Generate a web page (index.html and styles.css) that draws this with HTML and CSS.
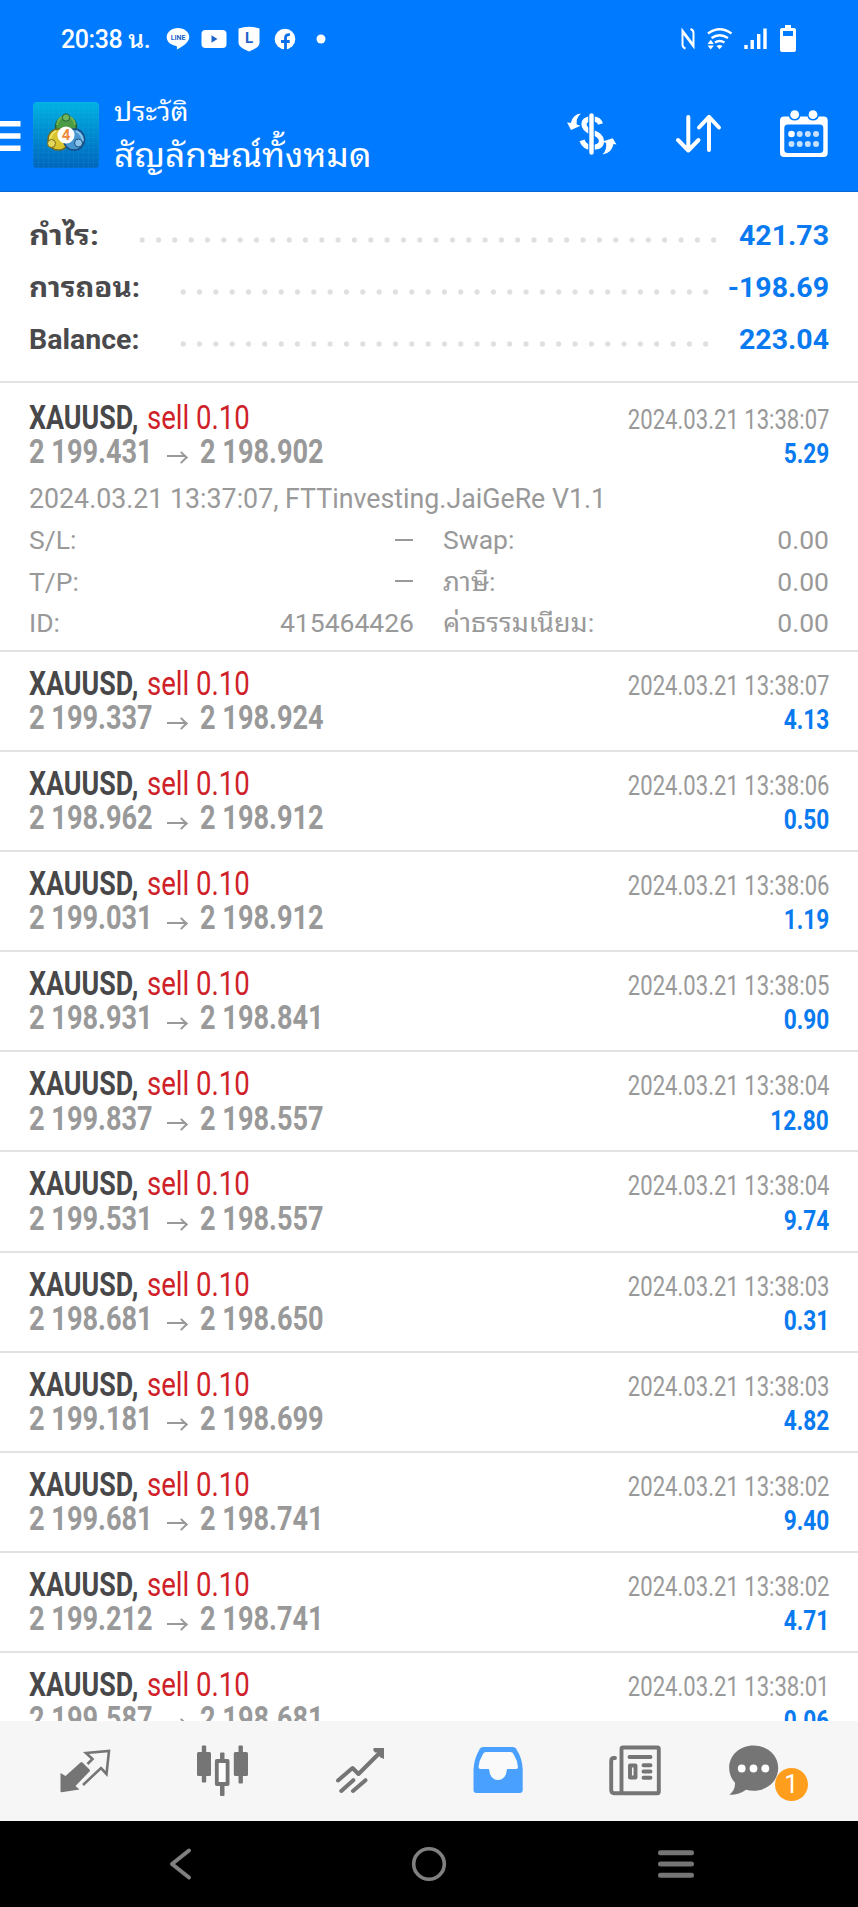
FILE: index.html
```html
<!DOCTYPE html>
<html lang="th">
<head>
<meta charset="utf-8">
<title>ประวัติ</title>
<link rel="stylesheet" href="styles.css">
</head>
<body>
<div class="screen">
  <header class="header">
    <div class="status">
      <span class="clock">20:38 น.</span>
      <div class="status-apps">
        <svg width="24" height="24" viewBox="0 0 24 24"><path d="M12 1C5.700 1 .7 5 .7 10c0 4.600 4 8.200 9.500 8.900.8.2.9.7.7 3.600 3-1.400 12.400-6.600 12.400-12.500C23.300 5 18.300 1 12 1z" fill="#fff"/><text x="12" y="12.600" class="line-word">LINE</text></svg>
        <svg width="26" height="24" viewBox="0 0 26 24"><rect x=".5" y="3" width="25" height="18" rx="4" fill="#fff"/><path d="M10.500 8.300v7.400l6-3.700z" fill="#1f63c8"/></svg>
        <svg width="22" height="26" viewBox="0 0 22 26"><path d="M.5 2.500Q11-1 21.500 2.500V17q0 4.500-10.500 8.500Q.5 21.500.5 17z" fill="#fff"/><text x="11" y="17" class="shield-letter">L</text></svg>
        <svg class="fb" width="22" height="22" viewBox="0 0 22 22"><circle cx="11" cy="11" r="10.300" fill="#fff"/><path d="M11.500 22v-8.500H7M11.500 13.500h4.200M11.500 13.500V9.500q0-3.200 4.400-2.800" fill="none" stroke="#0b6fe8" stroke-width="2.800"/></svg>
        <svg class="more-dot" width="10" height="10" viewBox="0 0 10 10"><circle cx="5" cy="5" r="4.500" fill="#fff"/></svg>
      </div>
      <div class="status-system">
        <svg width="16" height="28" viewBox="681 25 16 28"><path d="M686.500 48.500q-3-1-3-4V30.500l11 14.500M683.500 32l11 14.500V33q0-3-3-4" fill="none" stroke="#fff" stroke-width="2"/></svg>
        <svg width="26" height="28" viewBox="707 25 26 28"><g fill="none" stroke="#fff" stroke-width="2.300"><path d="M708 33.500q11.500-8.500 23.500 0"/><path d="M711.500 38q8-5.500 16.500 0"/><path d="M715 42.500q4.500-3 9.500 0"/></g><path d="M716.500 46q3-2 6 0l-3 3.200zM707.500 44l3.200-4.200 3.200 4.200zM707.500 45.500h6.400l-3.200 4z" fill="#fff"/></svg>
        <svg width="24" height="28" viewBox="745 25 24 28"><path d="M745.300 45h3.400v4h-3.400zM751.500 40h3.400v9h-3.400zM758 34h3.400v15H758zM764.300 28.500h3.400V49h-3.400z" fill="#fff"/></svg>
        <svg width="18" height="28" viewBox="780 25 18 28"><path d="M786 25h6v3h3q2 0 2 2v20q0 2-2 2h-12q-2 0-2-2V30q0-2 2-2h3zM784 31v5h10v-5z" fill="#fff" fill-rule="evenodd"/></svg>
      </div>
    </div>
    <div class="appbar">
      <svg class="menu" width="21" height="32" viewBox="0 120 21 32"><path d="M0 121h20.500v5.500H0zM0 133.200h20.500v5.500H0zM0 145.500h20.500v5.500H0z" fill="#fff"/></svg>
      <svg class="logo" width="66" height="66" viewBox="0 0 66 66">
        <defs>
          <linearGradient id="sky" x1="0" y1="0" x2="0" y2="1"><stop offset="0" stop-color="#00b2e2"/><stop offset=".5" stop-color="#0089cf"/><stop offset="1" stop-color="#0065bd"/></linearGradient>
          <pattern id="mesh" width="5" height="5" patternUnits="userSpaceOnUse"><path d="M0 0H5M0 0V5" stroke="#37b9e8" stroke-opacity=".18" fill="none"/></pattern>
        </defs>
        <rect width="66" height="66" rx="4" fill="url(#sky)"/><rect width="66" height="66" rx="4" fill="url(#mesh)"/>
        <circle cx="33" cy="25" r="10.500" fill="#4b9a46" stroke="#235f3c" stroke-width="1.500"/>
        <circle cx="25.500" cy="37.500" r="10.500" fill="#d8c42e" stroke="#746d20" stroke-width="1.500"/>
        <circle cx="41" cy="37.500" r="10.500" fill="#4596d1" stroke="#194d80" stroke-width="1.500"/>
        <path d="M24 23q1-8 9-9 8 1 9 9" fill="none" stroke="#75b64b" stroke-width="2"/>
        <path d="M17 38q1-7 6-9" fill="none" stroke="#eee063" stroke-width="2"/>
        <path d="M43 29q6 3 7 10" fill="none" stroke="#8ac5eb" stroke-width="2"/>
        <circle cx="33" cy="15.500" r="3.700" fill="#70b45b" stroke="#235f3c"/>
        <circle cx="18.500" cy="41.500" r="4" fill="#e5d65c" stroke="#746d20"/>
        <circle cx="45.500" cy="41" r="4" fill="#8ac2e9" stroke="#194d80"/>
        <circle cx="33" cy="33" r="8.600" fill="#fff"/><text x="33" y="38.300" class="logo-four">4</text>
      </svg>
      <div class="titles"><div class="kicker"><span>ประวัติ</span></div><div class="heading"><span>สัญลักษณ์ทั้งหมด</span></div></div>
      <div class="actions">
        <svg width="52" height="50" viewBox="567 110 52 50"><path d="M601.500 125q-1.500-5.200-8.500-5.200-8 0-8 5.500 0 5 8 8 9.500 3.200 9.500 8.700 0 6.300-9.500 6.300-7.500 0-10-7" fill="none" stroke="#fff" stroke-width="5.200"/><path d="M592.500 116v37.500" stroke="#007aff" stroke-width="6.500"/><path d="M592.500 116.500v37" stroke="#fff" stroke-width="4.400" stroke-linecap="round"/><path d="M582 114.500q-8 .5-10.200 9.500l-3.800-.8 4 7.800 9.500-4.200-3.800-1.200q-1-6.500 4.300-11.100zM603.500 155.500q9-1 11-10.500l3 .5-3.800-6.200-10.200 3.200 3.600 1.400q1 7-3.600 11.600z" fill="#fff"/></svg>
        <svg width="50" height="42" viewBox="674 114 50 42"><g fill="none" stroke="#fff" stroke-width="4" stroke-linecap="round" stroke-linejoin="round"><path d="M688.300 118v33M678 141l10.300 10.500L698.500 141"/><path d="M709 151v-33M699 128.500l10-10.700 10 10.700"/></g></svg>
        <svg width="48" height="50" viewBox="780 109 48 50"><path d="M784 116.500h5q1 4 5.700 4t5.600-4h7.200q1 4 5.600 4t5.600-4h5q4 0 4 4V153q0 4-4 4H784q-4 0-4-4v-32.500q0-4 4-4z" fill="#fff"/><circle cx="794.700" cy="114.700" r="4.400" fill="#fff"/><circle cx="813" cy="114.700" r="4.400" fill="#fff"/><rect x="784.300" y="124.500" width="39" height="28.500" rx="3.500" fill="#007aff"/><g fill="#c6e0ff"><circle cx="791.500" cy="134" r="3.300" fill="#fff"/><circle cx="799.700" cy="134" r="3"/><circle cx="807.800" cy="134" r="3"/><circle cx="816" cy="134" r="3"/><circle cx="791.500" cy="144" r="3"/><circle cx="799.700" cy="144" r="3"/><circle cx="807.800" cy="144" r="3"/><circle cx="816" cy="144" r="3"/></g></svg>
      </div>
    </div>
  </header>

  <section class="summary">
    <div class="sum"><span class="sum-label"><span class="profit-label">กำไร:</span></span><span class="dots long"></span><span class="sum-value">421.73</span></div>
    <div class="sum"><span class="sum-label"><span class="withdraw-label">การถอน:</span></span><span class="dots"></span><span class="sum-value">-198.69</span></div>
    <div class="sum"><span class="sum-label">Balance:</span><span class="dots"></span><span class="sum-value">223.04</span></div>
  </section>

  <main class="deals">
    <article class="deal open">
      <div class="row"><span class="name"><b>XAUUSD,</b><i>sell 0.10</i></span><span class="date">2024.03.21 13:38:07</span></div>
      <div class="row"><span class="prices"><b>2 199.431</b><span class="arrow"></span><b>2 198.902</b></span><span class="profit">5.29</span></div>
      <div class="comment">2024.03.21 13:37:07, FTTinvesting.JaiGeRe V1.1</div>
      <div class="details">
        <span>S/L:</span><span class="dash"></span><span>Swap:</span><span>0.00</span>
        <span>T/P:</span><span class="dash"></span><span><span class="th">ภาษี:</span></span><span>0.00</span>
        <span>ID:</span><span>415464426</span><span><span class="th">ค่าธรรมเนียม:</span></span><span>0.00</span>
      </div>
    </article>
    <article class="deal"><div class="row"><span class="name"><b>XAUUSD,</b><i>sell 0.10</i></span><span class="date">2024.03.21 13:38:07</span></div><div class="row"><span class="prices"><b>2 199.337</b><span class="arrow"></span><b>2 198.924</b></span><span class="profit">4.13</span></div></article>
    <article class="deal"><div class="row"><span class="name"><b>XAUUSD,</b><i>sell 0.10</i></span><span class="date">2024.03.21 13:38:06</span></div><div class="row"><span class="prices"><b>2 198.962</b><span class="arrow"></span><b>2 198.912</b></span><span class="profit">0.50</span></div></article>
    <article class="deal"><div class="row"><span class="name"><b>XAUUSD,</b><i>sell 0.10</i></span><span class="date">2024.03.21 13:38:06</span></div><div class="row"><span class="prices"><b>2 199.031</b><span class="arrow"></span><b>2 198.912</b></span><span class="profit">1.19</span></div></article>
    <article class="deal"><div class="row"><span class="name"><b>XAUUSD,</b><i>sell 0.10</i></span><span class="date">2024.03.21 13:38:05</span></div><div class="row"><span class="prices"><b>2 198.931</b><span class="arrow"></span><b>2 198.841</b></span><span class="profit">0.90</span></div></article>
    <article class="deal"><div class="row"><span class="name"><b>XAUUSD,</b><i>sell 0.10</i></span><span class="date">2024.03.21 13:38:04</span></div><div class="row"><span class="prices"><b>2 199.837</b><span class="arrow"></span><b>2 198.557</b></span><span class="profit">12.80</span></div></article>
    <article class="deal"><div class="row"><span class="name"><b>XAUUSD,</b><i>sell 0.10</i></span><span class="date">2024.03.21 13:38:04</span></div><div class="row"><span class="prices"><b>2 199.531</b><span class="arrow"></span><b>2 198.557</b></span><span class="profit">9.74</span></div></article>
    <article class="deal"><div class="row"><span class="name"><b>XAUUSD,</b><i>sell 0.10</i></span><span class="date">2024.03.21 13:38:03</span></div><div class="row"><span class="prices"><b>2 198.681</b><span class="arrow"></span><b>2 198.650</b></span><span class="profit">0.31</span></div></article>
    <article class="deal"><div class="row"><span class="name"><b>XAUUSD,</b><i>sell 0.10</i></span><span class="date">2024.03.21 13:38:03</span></div><div class="row"><span class="prices"><b>2 199.181</b><span class="arrow"></span><b>2 198.699</b></span><span class="profit">4.82</span></div></article>
    <article class="deal"><div class="row"><span class="name"><b>XAUUSD,</b><i>sell 0.10</i></span><span class="date">2024.03.21 13:38:02</span></div><div class="row"><span class="prices"><b>2 199.681</b><span class="arrow"></span><b>2 198.741</b></span><span class="profit">9.40</span></div></article>
    <article class="deal"><div class="row"><span class="name"><b>XAUUSD,</b><i>sell 0.10</i></span><span class="date">2024.03.21 13:38:02</span></div><div class="row"><span class="prices"><b>2 199.212</b><span class="arrow"></span><b>2 198.741</b></span><span class="profit">4.71</span></div></article>
    <article class="deal"><div class="row"><span class="name"><b>XAUUSD,</b><i>sell 0.10</i></span><span class="date">2024.03.21 13:38:01</span></div><div class="row"><span class="prices"><b>2 199.587</b><span class="arrow"></span><b>2 198.681</b></span><span class="profit">0.06</span></div></article>
  </main>

  <nav class="tabs">
    <svg width="52" height="52" viewBox="59 1745 52 52"><path d="M60.500 1773l5 3 15-13.500q1-1 2 0l7 7q1 1 0 2L75.500 1786l4 3.500-18 2.800q-1 0-1-1z" fill="#757575"/><path d="M87.500 1764l5-5-6.500-6 23-2-2.500 23-5.500-6-18 17" fill="none" stroke="#757575" stroke-width="2.600"/></svg>
    <svg width="52" height="52" viewBox="196 1745 52 52"><g fill="#757575"><rect x="197" y="1752" width="14" height="24" rx="1.500"/><rect x="201.800" y="1745.500" width="4.400" height="37" rx="1"/><rect x="233.800" y="1752" width="14.200" height="24" rx="1.500"/><rect x="238.500" y="1745.500" width="4.400" height="38" rx="1"/><rect x="220" y="1752.500" width="4.500" height="43.500" rx="1"/></g><rect x="216.800" y="1761" width="10.800" height="23" fill="#fff" stroke="#757575" stroke-width="3.800" stroke-linejoin="round"/></svg>
    <svg width="52" height="52" viewBox="334 1745 52 52"><g fill="none" stroke="#757575" stroke-width="4" stroke-linecap="round"><path d="M338 1780.500l14.500-12.500 6 6 22.500-22.500" stroke-linejoin="round"/><path d="M341.300 1791l12-10.800M353 1791l12.500-10.800"/></g><path d="M374 1748h10v11l-4.500-2v-4.500h-4.500q-3-3-1-4.500z" fill="#757575"/></svg>
    <svg width="52" height="52" viewBox="472 1745 52 52"><path d="M483 1747h30q2 0 3 1.500 6.500 10 6.700 21V1790q0 3-3 3H476.500q-3 0-3-3v-20.500q.5-11 6.500-21 1-1.500 3-1.500z" fill="#4aa0ff"/><path d="M486 1752h24.500q2 0 3 2 4 6.500 4.500 13 0 2-2 2H507q-1 11-9 11t-9-11h-8.500q-2 0-2-2 .5-6.500 4.500-13 1-2 3-2z" fill="#fafafa"/></svg>
    <svg width="54" height="52" viewBox="610 1745 54 52"><g fill="none" stroke="#757575" stroke-width="3.900" stroke-linecap="round" stroke-linejoin="round"><rect x="623.500" y="1747.500" width="37.300" height="45.700" rx="1.500"/><path d="M617 1758h-1q-2.800 0-2.800 3v29q0 3.200 3 3.200h7"/><path d="M631.500 1757h21M645.500 1765.300h7M645.500 1771.500h7M645.500 1777.800h7"/><rect x="632" y="1765.500" width="5.500" height="12"/></g></svg>
    <span class="chat"><svg width="50" height="52" viewBox="730 1745 50 52"><path d="M754.500 1745.500c14 0 24.700 9.800 24.700 22.500s-10.700 22.700-24.700 22.700q-4 0-7.500-1-7 5.300-16.500 5 6-5 5.500-12-5.800-6-5.800-14.700c0-12.700 10.500-22.500 24.300-22.500z" fill="#757575"/><g fill="#fff"><circle cx="742.700" cy="1768.500" r="3.900"/><circle cx="754.500" cy="1768.500" r="3.900"/><circle cx="766.300" cy="1768.500" r="3.900"/></g></svg><span class="badge">1</span></span>
  </nav>

  <footer class="sysnav">
    <svg width="24" height="34" viewBox="169 1847 24 34"><path d="M189 1850.500l-17 13.500 17 13.500" fill="none" stroke="#808080" stroke-width="4" stroke-linecap="round" stroke-linejoin="round"/></svg>
    <svg class="home" width="36" height="36" viewBox="0 0 36 36"><circle cx="18" cy="18" r="15.300" fill="none" stroke="#808080" stroke-width="3.600"/></svg>
    <svg width="36" height="30" viewBox="0 0 36 30"><path d="M2.500 3.800h31M2.500 15.100h31M2.500 26.300h31" stroke="#757575" stroke-width="5" stroke-linecap="round"/></svg>
  </footer>
</div>
</body>
</html>
```
FILE: styles.css
```css
* { box-sizing: border-box; }
body { margin: 0; background: #fff; font-family: Roboto, "Noto Sans Thai Looped", "Noto Looped Thai", "Loma", "Noto Sans Thai", "Noto Sans", sans-serif; }
svg { display: block; flex: none; }
.screen { display: flex; flex-direction: column; width: 858px; height: 1907px; overflow: hidden; }

.header { flex: none; height: 192px; background: #007aff; border-bottom: 1px solid #0a68d8; color: #fff; }
.status { display: flex; align-items: center; height: 78px; padding: 0 61px 0 61px; }
.clock { width: 105px; padding-top: 1px; font-size: 25px; font-weight: 500; line-height: 30px; white-space: nowrap; letter-spacing: -.4px; }
.status-apps { display: flex; align-items: center; gap: 11px; }
.fb { margin-left: 3px; }
.more-dot { margin-left: 9px; }
.status-system { display: flex; gap: 11px; margin-left: auto; }
.line-word { font: 700 7px Roboto, sans-serif; fill: #1f63c8; text-anchor: middle; }
.shield-letter { font: 700 15px Roboto, sans-serif; fill: #1f63c8; text-anchor: middle; }
.logo-four { font: 700 15px Roboto, sans-serif; fill: #f08a3c; text-anchor: middle; }

.appbar { display: flex; align-items: flex-start; height: 113px; padding-right: 30px; }
.menu { margin-top: 42px; }
.logo { margin: 24px 15px 0 12px; }
.titles { padding-top: 16px; white-space: nowrap; }
.kicker { height: 37px; line-height: 36px; font-size: 26px; }
.heading { height: 50px; line-height: 50px; font-size: 33px; }
.kicker span, .heading span { display: inline-block; transform-origin: left; }
.kicker span { transform: scaleX(1.085); }
.heading span { transform: scaleX(1.068); }
.actions { display: flex; align-items: center; gap: 56px; margin: 31px 0 0 auto; }

.summary { flex: none; height: 189px; padding: 18px 29px 0; }
.sum { display: flex; align-items: center; height: 51.800px; line-height: 52px; font-size: 28.500px; }
.sum-label { flex: 1; font-weight: 700; color: #4a4a4c; white-space: nowrap; }
.profit-label, .withdraw-label, .th { display: inline-block; transform-origin: left; }
.profit-label { transform: scaleX(1.11); }
.withdraw-label { transform: scaleX(1.035); }
.dots { width: 539px; height: 6px; margin: 9px 0 0; background: radial-gradient(circle at 8.170px 3px, #dfdfdf 2.300px, transparent 3px) 0 0 / 16.340px 6px repeat-x; }
.dots.long { width: 588px; margin-right: -8px; }
.sum-value { width: 115px; text-align: right; font-weight: 700; color: #0a7af0; }

.deals { flex: 1; min-height: 0; overflow: hidden; }
.deal { height: 100.100px; padding: 15px 29px 0; border-top: 2px solid #e2e2e2; }
.deal.open { height: 269px; padding-top: 17.500px; }
.row { display: flex; justify-content: space-between; align-items: baseline; height: 34.200px; line-height: 34px; white-space: nowrap; }
.name, .prices { display: flex; align-items: baseline; }
.name { font-size: 33px; color: #48484a; }
.name b, .name i, .prices b { display: block; transform-origin: left; }
.name b { width: 118px; transform: scaleX(.813); }
.name i { font-style: normal; color: #cf2128; transform: scaleX(.835); }
.prices { font-size: 32.500px; color: #999; }
.prices b { width: 138px; transform: scaleX(.835); }
.arrow { width: 20px; height: 10px; margin-right: 13px; background: linear-gradient(#999, #999) 0 4px / 19px 2px no-repeat; position: relative; top: -1.500px; }
.arrow::after { content: ""; position: absolute; right: 1px; top: 1.500px; width: 7px; height: 7px; border: solid #999; border-width: 2px 2px 0 0; transform: rotate(45deg); }
.date, .profit { font-size: 27px; transform-origin: right; transform: scaleX(.818); }
.date { color: #999; }
.profit { font-weight: 700; color: #0a7af0; transform: scaleX(.84); }
.comment { height: 46px; line-height: 46px; margin-top: 7px; font-size: 26.750px; color: #999; white-space: nowrap; }
.details { display: grid; grid-template-columns: 85px 300px 165px 1fr; grid-auto-rows: 41.300px; margin-top: -2.500px; line-height: 41.300px; font-size: 26.500px; color: #999; white-space: nowrap; }
.details > :nth-child(even) { text-align: right; }
.details > :nth-child(4n+3) { padding-left: 29px; }
.th { transform: scaleX(1.015); }
.dash { justify-self: end; align-self: center; width: 18px; height: 2px; margin-right: 1px; background: #999; }

.tabs { flex: none; display: grid; grid-template-columns: repeat(6, 1fr); justify-items: center; height: 100px; padding: 24px 16px 0 16px; background: #f6f6f6; }
.chat { position: relative; margin-left: -39px; }
.badge { position: absolute; left: 46px; top: 23px; width: 33px; height: 33px; border-radius: 50%; background: #ff9d1c; color: #fff; font-size: 25px; line-height: 33px; text-align: center; }
.sysnav { flex: none; display: flex; align-items: center; justify-content: space-between; height: 86px; padding: 0 164px 0 169px; background: #000; }
.home { margin-left: 7px; }
```
